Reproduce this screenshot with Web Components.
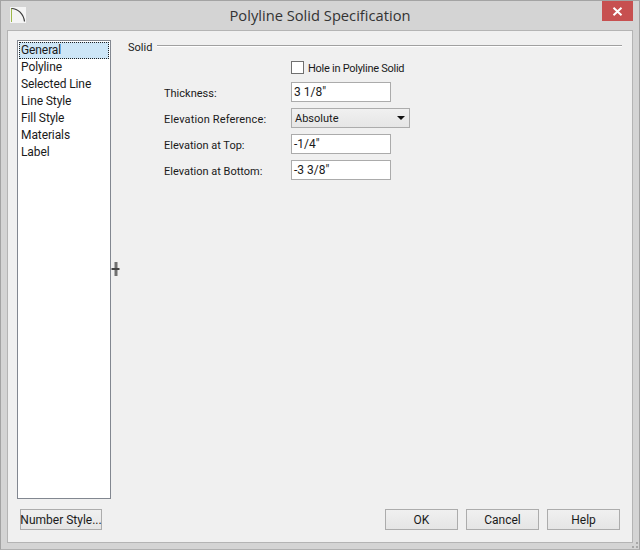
<!DOCTYPE html>
<html><head><meta charset="utf-8"><style>
html,body{margin:0;padding:0;width:640px;height:550px;overflow:hidden}
body{font:12px/15px Roboto,"Liberation Sans",sans-serif;color:#1a1a1a}
</style></head><body>
<app-dialog></app-dialog>
<template id="t-dialog"><style>
:host{display:flex;flex-direction:column;box-sizing:border-box;width:640px;height:550px;background:#d4d4d4;border:1px solid #a3a3a3;border-bottom-color:#b0b0b0}
.title{display:flex;align-items:flex-start;height:29px;flex:none;position:relative}
.logo{margin:6px 0 0 9px;width:16px;height:16px;flex:none;display:block}
.cap{flex:1;text-align:center;font:14.7px/28px "Open Sans",sans-serif;color:#333;padding-left:12px}
.close{flex:none;width:31px;height:20px;margin-right:6px;background:#c75050;display:flex;align-items:center;justify-content:center}
.panel{flex:1;min-height:0;margin:0 6px 6px 6px;background:#f0f0f0;border:1px solid #b4b4b4;display:flex;flex-direction:column;padding:9px 12px 12px 9px;box-sizing:border-box}
.top{flex:1;min-height:0;display:flex}
.grip{flex:none;width:17px;display:flex;align-items:center;justify-content:flex-start;padding-bottom:1px;box-sizing:border-box}
.main{flex:1;min-width:0}
.foot{flex:none;display:flex;align-items:center;gap:8px;margin-top:10px;padding-left:3px}
.foot .sp{flex:1}
.rs{position:absolute;right:2px;bottom:2px}
.resize{position:relative;flex:none;height:0}
</style>
<div class="title">
<svg class="logo" viewBox="0 0 16 16"><rect width="16" height="16" fill="#f4f4f4"/><path d="M1.5 1V15" stroke="#9db84a" stroke-width="1" fill="none"/><path d="M1.5 1.5C8 1.5 13.5 7 14.5 14.5" stroke="#3c3c3c" stroke-width="1.2" fill="none"/></svg>
<div class="cap">Polyline Solid Specification</div>
<div class="close"><svg width="11" height="9" viewBox="0 0 11 9"><path d="M1.5 .8L9.5 8.2M9.5 .8L1.5 8.2" stroke="#fff" stroke-width="2" fill="none"/></svg></div>
</div>
<div class="panel">
<div class="top">
<tab-list>
<list-item selected>General</list-item><list-item>Polyline</list-item><list-item>Selected Line</list-item><list-item>Line Style</list-item><list-item>Fill Style</list-item><list-item>Materials</list-item><list-item>Label</list-item>
</tab-list>
<div class="grip"><svg width="9" height="14" viewBox="0 0 9 14"><rect x="3.5" width="3" height="14" fill="#707070"/><rect y="6" x="0.5" width="8" height="2" fill="#444"/></svg></div>
<div class="main"><solid-form></solid-form></div>
</div>
<div class="foot">
<dlg-button style="width:82px">Number Style...</dlg-button>
<span class="sp"></span>
<dlg-button style="width:73px">OK</dlg-button>
<dlg-button style="width:73px">Cancel</dlg-button>
<dlg-button style="width:73px">Help</dlg-button>
</div>
</div>
<div class="resize"><svg class="rs" style="bottom:-4px;right:0" width="11" height="11" viewBox="0 0 11 11" fill="#a8a8a8"><rect x="8" y="0" width="2" height="2"/><rect x="4" y="4" width="2" height="2"/><rect x="8" y="4" width="2" height="2"/><rect x="0" y="8" width="2" height="2"/><rect x="4" y="8" width="2" height="2"/><rect x="8" y="8" width="2" height="2"/></svg></div>
</template>
<template id="t-list"><style>
:host{display:flex;flex-direction:column;box-sizing:border-box;width:94px;flex:none;background:#fff;border:1px solid #828790;padding:1px}
</style><slot></slot></template>
<template id="t-item"><style>
:host{display:block;height:17px;line-height:16px;padding-left:2px;box-sizing:border-box;white-space:nowrap;letter-spacing:-.1px}
:host([selected]){background:#cde6f7;outline:1px dotted #222;outline-offset:-1px}
</style><slot></slot></template>
<template id="t-form"><style>
:host{display:block;font-size:11px}
.group{display:flex;align-items:center;gap:6px;height:14px}
.group span:first-child{width:23px;white-space:nowrap}
.rule{flex:1;height:1px;background:#a0a0a0;box-shadow:0 1px 0 #fff;margin-right:-2px;margin-top:-3px}
.grid{display:grid;grid-template-columns:127px auto;justify-content:start;align-items:center;row-gap:6px;padding-left:36px;margin-top:6px}
.grid>span{position:relative;top:1px;white-space:nowrap}
.chk{grid-column:2;display:flex;align-items:center;gap:4px;height:15px;margin-bottom:1px;letter-spacing:-.27px}
.box{width:11px;height:11px;border:1px solid #707070;background:#fff;flex:none}
.ref{letter-spacing:.15px}
</style>
<div class="group"><span>Solid</span><span class="rule"></span></div>
<div class="grid">
<label class="chk"><span class="box"></span><span style="position:relative;top:1px">Hole in Polyline Solid</span></label>
<span>Thickness:</span><text-field>3 1/8"</text-field>
<span class="ref">Elevation Reference:</span><drop-down>Absolute</drop-down>
<span>Elevation at Top:</span><text-field>-1/4"</text-field>
<span>Elevation at Bottom:</span><text-field>-3 3/8"</text-field>
</div></template>
<template id="t-field"><style>
:host{display:block;box-sizing:border-box;width:100px;height:20px;background:#fff;border:1px solid #ababab;line-height:18px;padding-left:2px;font-size:12px}
</style><slot></slot></template>
<template id="t-drop"><style>
:host{display:flex;align-items:center;justify-content:space-between;box-sizing:border-box;width:119px;height:20px;background:linear-gradient(#f0f0f0,#e6e6e6);border:1px solid #acacac;padding:0 4px 0 3px;font-size:11px}
i{width:0;height:0;border:4px solid transparent;border-top:4px solid #111;border-bottom:0;border-left-width:4.5px;border-right-width:4.5px}
</style><slot></slot><i></i></template>
<template id="t-btn"><style>
:host{display:flex;align-items:center;justify-content:center;box-sizing:border-box;height:21px;background:linear-gradient(#f0f0f0,#e5e5e5);border:1px solid #acacac;white-space:nowrap;padding-top:1px}
</style><slot></slot></template>
<script>
const reg=(n,t)=>customElements.define(n,class extends HTMLElement{constructor(){super();this.attachShadow({mode:'open'}).appendChild(document.getElementById(t).content.cloneNode(true));}});
reg('app-dialog','t-dialog');reg('tab-list','t-list');reg('list-item','t-item');reg('solid-form','t-form');reg('text-field','t-field');reg('drop-down','t-drop');reg('dlg-button','t-btn');
</script>
</body></html>
